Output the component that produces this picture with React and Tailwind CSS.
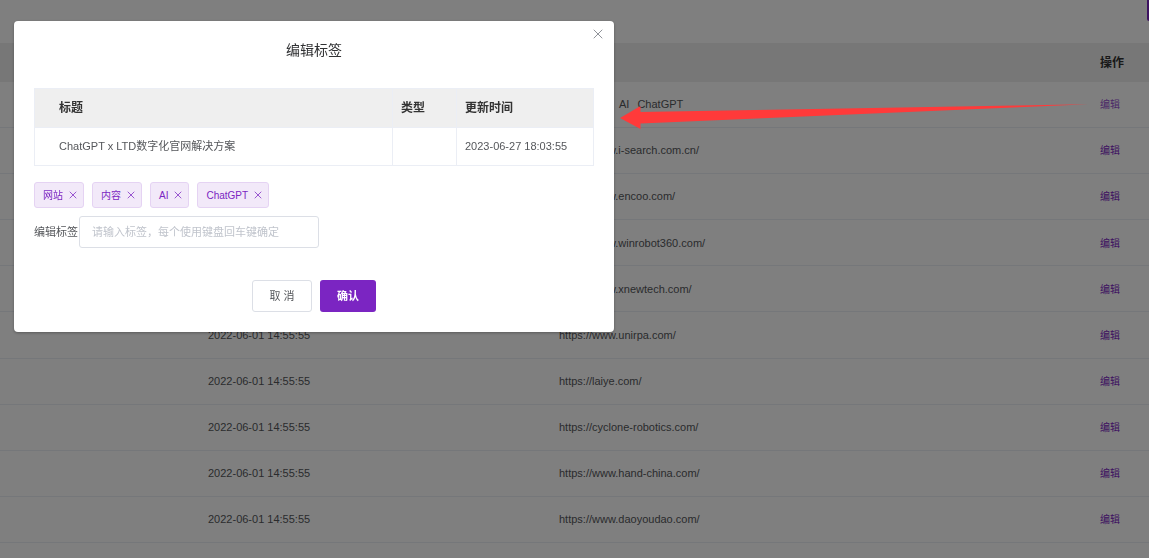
import React, { useState } from 'react';
import { X } from 'lucide-react';

const rows = [
  { time: '2023-06-27 18:03:55', tags: ['网站', '内容', 'AI', 'ChatGPT'] },
  { time: '2022-06-01 14:55:55', url: 'https://www.i-search.com.cn/' },
  { time: '2022-06-01 14:55:55', url: 'https://www.encoo.com/' },
  { time: '2022-06-01 14:55:55', url: 'https://www.winrobot360.com/' },
  { time: '2022-06-01 14:55:55', url: 'https://www.xnewtech.com/' },
  { time: '2022-06-01 14:55:55', url: 'https://www.unirpa.com/' },
  { time: '2022-06-01 14:55:55', url: 'https://laiye.com/' },
  { time: '2022-06-01 14:55:55', url: 'https://cyclone-robotics.com/' },
  { time: '2022-06-01 14:55:55', url: 'https://www.hand-china.com/' },
  { time: '2022-06-01 14:55:55', url: 'https://www.daoyoudao.com/' },
];

const ContentTable = () => (
  <table className="h-[500px] w-full table-fixed border-separate border-spacing-0 text-left text-[11px] text-[#55575b]">
    <colgroup>
      <col className="w-[200px]" />
      <col className="w-[351px]" />
      <col />
      <col className="w-[57px]" />
    </colgroup>
    <thead>
      <tr className="h-[39px] bg-[#efefef] text-xs text-[#333]">
        <th></th>
        <th></th>
        <th></th>
        <th className="px-2 font-bold">操作</th>
      </tr>
    </thead>
    <tbody>
      {rows.map((row, i) => (
        <tr key={i} className="h-[46px]">
          <td className="border-b border-[#ebeef5]"></td>
          <td className="border-b border-[#ebeef5] px-2">{row.time}</td>
          <td className="border-b border-[#ebeef5] px-2">
            {row.tags ? (
              <div className="flex gap-2">
                {row.tags.map((tag) => <span key={tag}>{tag}</span>)}
              </div>
            ) : row.url}
          </td>
          <td className="border-b border-[#ebeef5] px-2">
            <button className={i === 0 ? 'text-[10px] text-[#9550d0]' : 'text-[10px] text-[#7b25c2]'}>编辑</button>
          </td>
        </tr>
      ))}
    </tbody>
  </table>
);

const EditTagDialog = () => {
  const [tags, setTags] = useState(['网站', '内容', 'AI', 'ChatGPT']);
  const [value, setValue] = useState('');

  const removeTag = (tag) => setTags(tags.filter((t) => t !== tag));

  const handleKeyDown = (e) => {
    const next = value.trim();
    if (e.key === 'Enter' && next) {
      if (!tags.includes(next)) setTags([...tags, next]);
      setValue('');
    }
  };

  return (
    <div role="dialog" aria-labelledby="dialog-title" className="relative w-full max-w-[600px] rounded bg-white p-5 shadow-[0_1px_3px_rgba(0,0,0,0.3)]">
      <button aria-label="关闭" className="absolute top-[5px] right-2 text-[#909399]">
        <X size={16} strokeWidth={1.5} />
      </button>
      <h2 id="dialog-title" className="text-center text-sm leading-[18px] text-[#303133]">编辑标签</h2>

      <table className="mt-[29px] w-full table-fixed border-collapse text-left text-[11px] text-[#55575b]">
        <colgroup>
          <col />
          <col className="w-16" />
          <col className="w-[137px]" />
        </colgroup>
        <thead>
          <tr className="h-[39px] bg-[#efefef] text-xs text-[#333]">
            <th className="border border-[#ebeef5] pr-2 pl-6 font-bold">标题</th>
            <th className="border border-[#ebeef5] px-2 font-bold">类型</th>
            <th className="border border-[#ebeef5] px-2 font-bold">更新时间</th>
          </tr>
        </thead>
        <tbody>
          <tr className="h-[38px]">
            <td className="border border-[#ebeef5] pr-2 pl-6">ChatGPT x LTD数字化官网解决方案</td>
            <td className="border border-[#ebeef5] px-2"></td>
            <td className="border border-[#ebeef5] px-2">2023-06-27 18:03:55</td>
          </tr>
        </tbody>
      </table>

      <div className="mt-4 flex flex-wrap gap-2">
        {tags.map((tag) => (
          <span key={tag} className="flex h-[26px] items-center gap-1 rounded-[3px] border border-[#e5d3f3] bg-[#f2e9f9] pr-1 pl-2 text-[10px] text-[#7b25c2]">
            {tag}
            <button aria-label={`删除 ${tag}`} onClick={() => removeTag(tag)}>
              <X size={12} strokeWidth={1.5} />
            </button>
          </span>
        ))}
      </div>

      <div className="mt-2 flex items-center text-[11px] text-[#55575b]">
        <label htmlFor="tag-input" className="w-[45px] shrink-0 whitespace-nowrap">编辑标签</label>
        <input
          id="tag-input"
          type="text"
          value={value}
          onChange={(e) => setValue(e.target.value)}
          onKeyDown={handleKeyDown}
          placeholder="请输入标签，每个使用键盘回车键确定"
          className="h-8 w-60 rounded-[3px] border border-[#dcdfe6] px-3 placeholder:text-[#c0c4cc]"
        />
      </div>

      <div className="mt-8 flex justify-center gap-2 text-[11px]">
        <button className="h-8 w-[60px] rounded-[3px] border border-[#dcdfe6] text-[#55575b]">取 消</button>
        <button className="h-8 w-14 rounded-[3px] bg-[#7b25c2] font-bold text-white">确认</button>
      </div>
    </div>
  );
};

const App = () => {
  return (
    <div className="h-screen overflow-hidden bg-white font-['Liberation_Sans','Noto_Sans_CJK_SC',sans-serif]">
      <div className="flex h-[43px] justify-end">
        <button aria-label="新增" className="h-[21px] w-0.5 rounded-bl-xs bg-[#7b25c2]"></button>
      </div>
      <ContentTable />

      <div className="fixed inset-0 bg-black/50 pt-[21px] pl-3.5">
        <EditTagDialog />
      </div>

      {/* pointer from the edit link to the dialog */}
      <svg className="pointer-events-none absolute top-[104px] left-[620px]" width="470" height="26" viewBox="0 0 470 26">
        <path d="M0 14 20.5 2V8L468 .3 20.5 19.5V25Z" fill="#ff3a3a" />
      </svg>
    </div>
  );
};

export default App;
